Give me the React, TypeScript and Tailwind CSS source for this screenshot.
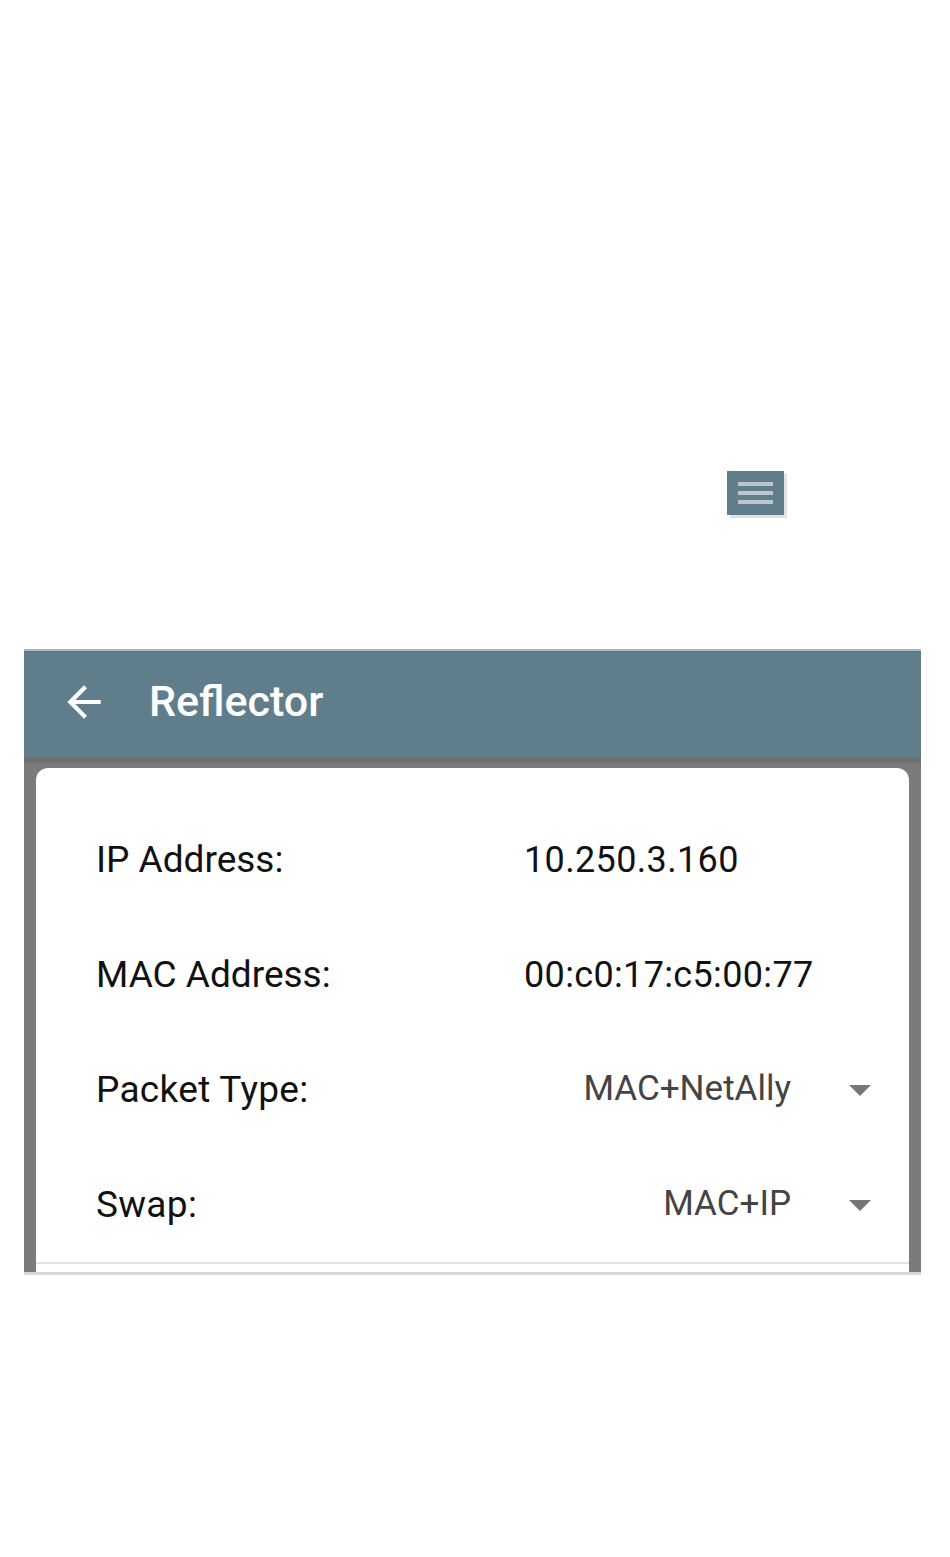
import React from 'react';

const rows = [
  { label: 'IP Address:', value: '10.250.3.160' },
  { label: 'MAC Address:', value: '00:c0:17:c5:00:77' },
];

const selects = [
  { label: 'Packet Type:', value: 'MAC+NetAlly' },
  { label: 'Swap:', value: 'MAC+IP' },
];

function MenuButton() {
  return (
    <div className="w-[57px] h-[44px] bg-[#607d8b] shadow-[3px_3px_0_#e3e3e3] flex flex-col items-center justify-center gap-[5px]">
      <div className="w-[35px] h-[4px] bg-[#bac6cc]" />
      <div className="w-[35px] h-[4px] bg-[#bac6cc]" />
      <div className="w-[35px] h-[4px] bg-[#bac6cc]" />
    </div>
  );
}

function Caret() {
  return (
    <svg width="22" height="11" viewBox="0 0 22 11" className="shrink-0">
      <path d="M0 0h22L11 11z" fill="#777777" />
    </svg>
  );
}

export default function App() {
  return (
    <div className="w-[950px] h-[1557px] bg-white font-['Roboto',sans-serif]">
      <div className="flex justify-end pr-[166px] pt-[471px]">
        <MenuButton />
      </div>

      <div className="ml-[24px] w-[897px] mt-[134px]">
        <div className="h-[109px] bg-[#607d8b] border-t-2 border-[#aab9c0] flex items-center pb-[6px]">
          <svg width="50" height="50" viewBox="0 0 24 24" className="ml-[35px]">
            <path d="M20 11H7.83l5.59-5.59L12 4l-8 8 8 8 1.41-1.41L7.83 13H20v-2z" fill="#ffffff" />
          </svg>
          <span className="ml-[40px] text-[43px] font-medium text-white leading-none">Reflector</span>
        </div>

        <div className="bg-[#7b7b7b] bg-[linear-gradient(#6a6a6a,#7b7b7b_8px)] px-[12px] pt-[10px] border-b-[3px] border-[#d6d6d6]">
          <div className="bg-white rounded-t-[12px] pt-[34px] pb-[8px]">
            <div className="border-b-2 border-[#e2e2e2]">
              {rows.map((r) => (
                <div key={r.label} className="h-[115px] flex items-center text-[#111111]">
                  <div className="w-[488px] pl-[60px] text-[37px]">{r.label}</div>
                  <div className="text-[36px] tracking-[0.35px]">{r.value}</div>
                </div>
              ))}
              {selects.map((s) => (
                <div key={s.label} className="h-[115px] flex items-center">
                  <div className="flex-1 pl-[60px] text-[37px] tracking-[0.3px] text-[#111111]">{s.label}</div>
                  <div className="text-[35px] text-[#444444] mr-[58px]">{s.value}</div>
                  <div className="mr-[38px] mt-[2px]">
                    <Caret />
                  </div>
                </div>
              ))}
            </div>
          </div>
        </div>
      </div>
    </div>
  );
}
